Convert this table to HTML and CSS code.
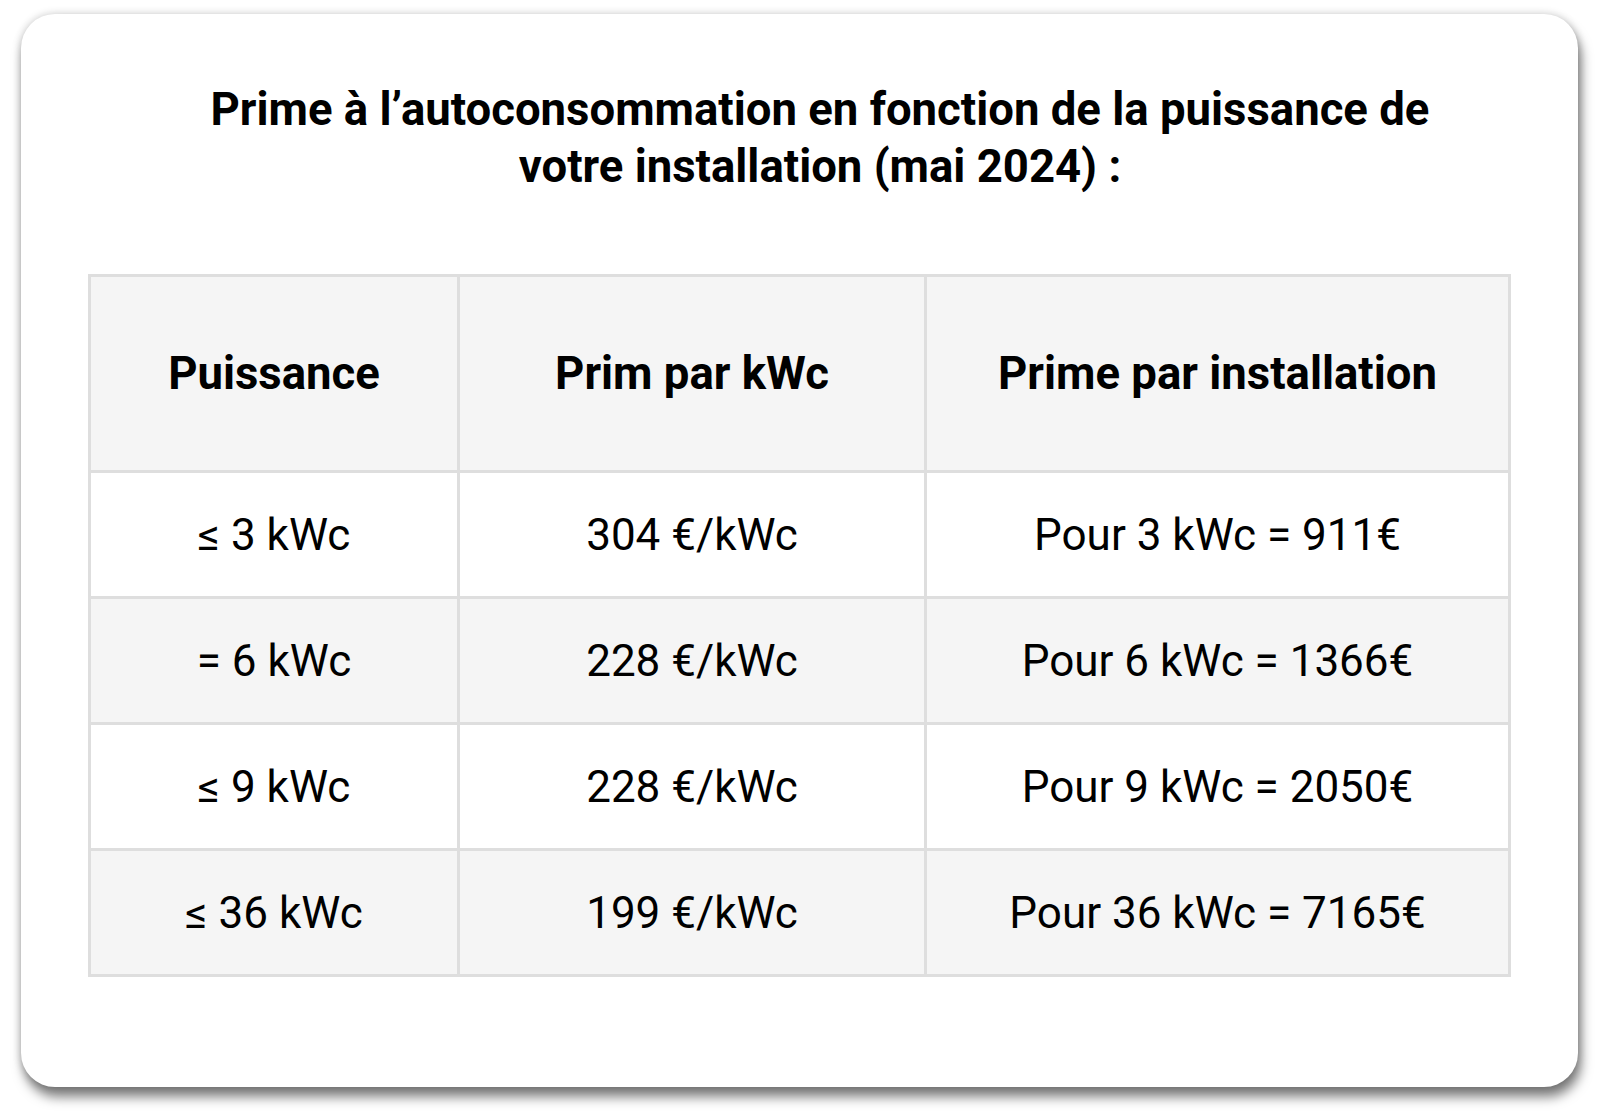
FILE: index.html
```html
<!DOCTYPE html>
<html lang="fr">
<head>
<meta charset="utf-8">
<title>Prime à l'autoconsommation</title>
<link rel="stylesheet" href="styles.css">
</head>
<body>
<div class="card">
  <h1 class="title">Prime à l’autoconsommation en fonction de la puissance de<br>votre installation (mai 2024) :</h1>
  <div class="grid">
    <div class="cell head">Puissance</div>
    <div class="cell head">Prim par kWc</div>
    <div class="cell head">Prime par installation</div>

    <div class="cell">≤ 3 kWc</div>
    <div class="cell">304 €/kWc</div>
    <div class="cell">Pour 3 kWc = 911€</div>

    <div class="cell alt">= 6 kWc</div>
    <div class="cell alt">228 €/kWc</div>
    <div class="cell alt">Pour 6 kWc = 1366€</div>

    <div class="cell">≤ 9 kWc</div>
    <div class="cell">228 €/kWc</div>
    <div class="cell">Pour 9 kWc = 2050€</div>

    <div class="cell alt">≤ 36 kWc</div>
    <div class="cell alt">199 €/kWc</div>
    <div class="cell alt">Pour 36 kWc = 7165€</div>
  </div>
</div>
</body>
</html>
```

FILE: styles.css
```css
html, body {
  margin: 0;
  padding: 0;
  background: #ffffff;
}

body {
  box-sizing: border-box;
  min-height: 1115px;
  padding: 14px 0 28px 21px;
  font-family: Roboto, "Liberation Sans", Arial, sans-serif;
  color: #000;
}

.card {
  box-sizing: border-box;
  width: 1557px;
  height: 1073px;
  background: #fff;
  border-radius: 34px;
  box-shadow: 3px 10px 12px rgba(0, 0, 0, 0.5), 0 0 8px rgba(0, 0, 0, 0.2);
  padding: 67px 67px 0 67px;
}

.title {
  margin: 0;
  padding-left: 41px;
  font-size: 45.5px;
  line-height: 57px;
  font-weight: 700;
  text-align: center;
}

.grid {
  margin-top: 79px;
  display: grid;
  grid-template-columns: 366px 464px 581px;
  grid-template-rows: 193px repeat(4, 123px);
  gap: 3px;
  padding: 3px;
  background: #dedede;
  width: 1423px;
  box-sizing: border-box;
}

.cell {
  background: #ffffff;
  display: flex;
  align-items: center;
  justify-content: center;
  font-size: 44px;
  font-weight: 400;
}

.cell.head {
  background: #f5f5f5;
  font-size: 45.5px;
  font-weight: 700;
}

.cell.alt {
  background: #f5f5f5;
}
```
